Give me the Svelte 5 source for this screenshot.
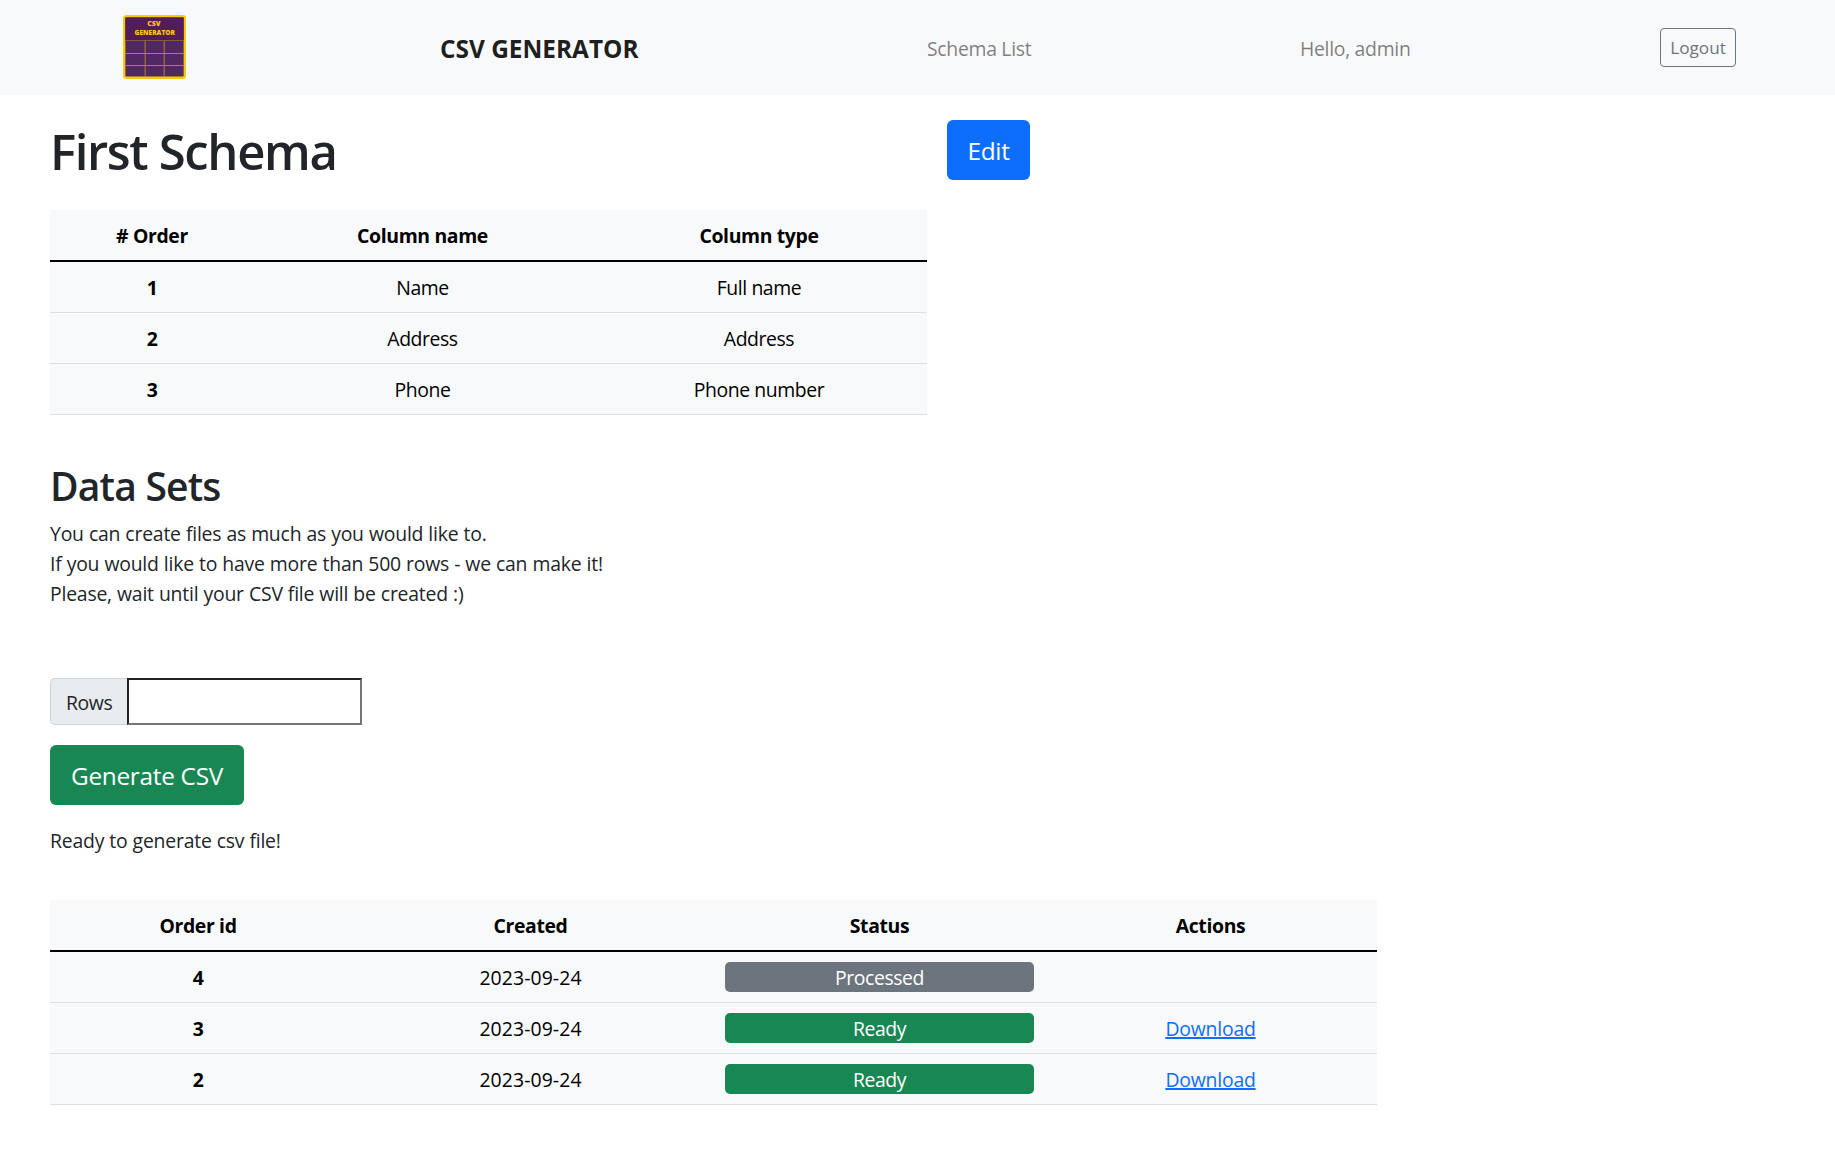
<script>
  const columns = [
    { order: 1, name: 'Name', type: 'Full name' },
    { order: 2, name: 'Address', type: 'Address' },
    { order: 3, name: 'Phone', type: 'Phone number' }
  ];
  const dataSets = [
    { id: 4, created: '2023-09-24', status: 'Processed' },
    { id: 3, created: '2023-09-24', status: 'Ready' },
    { id: 2, created: '2023-09-24', status: 'Ready' }
  ];
  let rows = $state('');
</script>

<nav class="navbar">
  <svg class="logo" viewBox="0 0 64 64" preserveAspectRatio="none" role="img" aria-label="CSV Generator">
    <rect x="1.2" y="1.2" width="61.6" height="61.6" rx="2" fill="#4f2864" stroke="#fdc904" stroke-width="2.4" />
    <rect x="2.4" y="2.4" width="59.2" height="22.6" fill="#511c58" />
    <g fill="none" stroke="#b4861f" stroke-width="1">
      <path d="M2.5 25.5H61.5" stroke="#8a5a3c" />
      <path d="M2.5 38.5H61.5M2.5 50.5H61.5M22.5 26V61.5M41.8 26V61.5" />
    </g>
    <text x="31.5" y="11.5" textLength="13.5" lengthAdjust="spacingAndGlyphs">CSV</text>
    <text x="32.3" y="20.5" textLength="41" lengthAdjust="spacingAndGlyphs">GENERATOR</text>
  </svg>
  <a class="brand" href="#home">CSV GENERATOR</a>
  <a class="link list" href="#schemas">Schema List</a>
  <span class="link hello">Hello, admin</span>
  <button class="logout">Logout</button>
</nav>

<main>
  <header class="title-row">
    <h1>First Schema</h1>
    <button class="btn primary">Edit</button>
  </header>

  <table class="schema">
    <colgroup><col class="s1" /><col class="s2" /><col class="s3" /></colgroup>
    <thead>
      <tr><th># Order</th><th>Column name</th><th>Column type</th></tr>
    </thead>
    <tbody>
      {#each columns as c}
        <tr><th>{c.order}</th><td>{c.name}</td><td>{c.type}</td></tr>
      {/each}
    </tbody>
  </table>

  <h2>Data Sets</h2>
  <p class="intro">
    You can create files as much as you would like to.<br />
    If you would like to have more than 500 rows - we can make it!<br />
    Please, wait until your CSV file will be created :)
  </p>

  <div class="group">
    <label for="rows">Rows</label>
    <input id="rows" type="text" bind:value={rows} />
  </div>
  <button class="btn success">Generate CSV</button>
  <p class="ready">Ready to generate csv file!</p>

  <table class="sets">
    <colgroup><col class="d1" /><col class="d2" /><col class="d3" /><col class="d4" /></colgroup>
    <thead>
      <tr><th>Order id</th><th>Created</th><th>Status</th><th>Actions</th></tr>
    </thead>
    <tbody>
      {#each dataSets as d}
        <tr>
          <th>{d.id}</th>
          <td class="date">{d.created}</td>
          <td class="status"><div class="badge" class:done={d.status === 'Ready'}>{d.status}</div></td>
          <td>{#if d.status === 'Ready'}<a class="download" href="#download-{d.id}">Download</a>{/if}</td>
        </tr>
      {/each}
    </tbody>
  </table>
</main>

<style>
  :global(body) {
    background: #fff;
    color: #212529;
    font: 400 19.4px/30px 'Open Sans', 'Noto Sans', sans-serif;
    letter-spacing: -0.42px;
  }
  .navbar {
    display: flex;
    align-items: center;
    height: 95px;
    background: #f8f9fa;
    white-space: nowrap;
  }
  .logo {
    flex: none;
    width: 63px;
    height: 64px;
    margin: 0 0 1px 123px;
  }
  .logo text {
    font: 800 6.6px 'Open Sans', sans-serif;
    letter-spacing: 0;
    fill: #fdc904;
    text-anchor: middle;
  }
  .brand {
    width: 487px;
    margin-left: 254px;
    padding-top: 2px;
    font-size: 24.4px;
    font-weight: 700;
    letter-spacing: 0;
    color: rgba(0, 0, 0, 0.9);
    text-decoration: none;
  }
  .link {
    padding-top: 2px;
    color: rgba(0, 0, 0, 0.5);
    letter-spacing: -0.3px;
    text-decoration: none;
  }
  .list { width: 373px; }
  .hello { width: 360px; }
  .logout {
    box-sizing: border-box;
    width: 76px;
    height: 39px;
    padding: 0;
    border: 1px solid #6c757d;
    border-radius: 4px;
    background: transparent;
    color: #6c757d;
    font: 400 17.2px/26px 'Open Sans', sans-serif;
    letter-spacing: 0;
  }
  main {
    display: flow-root;
    padding: 25px 50px 0;
  }
  .title-row {
    display: flex;
    height: 60px;
  }
  h1 {
    width: 897px;
    margin: 0;
    font-size: 49px;
    font-weight: 600;
    line-height: 62px;
    letter-spacing: -1.35px;
  }
  h2 {
    margin: 47px 0 9px;
    font-size: 39px;
    font-weight: 600;
    line-height: 48px;
    letter-spacing: -0.8px;
  }
  .btn {
    display: block;
    height: 60px;
    padding: 1px 0 0;
    border: 0;
    border-radius: 6px;
    color: #fff;
    font: 400 24.4px/59px 'Open Sans', sans-serif;
    letter-spacing: -0.3px;
  }
  .primary { width: 83px; background: #0d6efd; }
  .success { width: 194px; margin-top: 20px; background: #198754; }
  table {
    table-layout: fixed;
    border-collapse: separate;
    border-spacing: 0;
    background: #f8f9fa;
    color: #000;
    text-align: center;
  }
  th, td {
    height: 30px;
    padding: 11px 10px 9px;
    border-bottom: 1px solid #dfe0e1;
  }
  th { font-weight: 700; letter-spacing: -0.35px; }
  thead th { border-bottom: 2px solid #000; }
  .schema { width: 877px; margin-top: 30px; }
  .s1 { width: 204px; }
  .s2 { width: 337px; }
  .s3 { width: 336px; }
  .sets { width: 1327px; margin-top: 44px; }
  .d1 { width: 296px; }
  .d2 { width: 369px; }
  .d3 { width: 329px; }
  .d4 { width: 333px; }
  p { margin: 0; letter-spacing: -0.21px; word-spacing: 0.3px; }
  .group {
    display: flex;
    width: 312px;
    height: 47px;
    margin-top: 69px;
  }
  label {
    box-sizing: border-box;
    width: 77px;
    padding: 10px 0 0 15px;
    border: 1px solid #ced4da;
    border-right: 0;
    border-radius: 5px 0 0 5px;
    background: #e9ecef;
    line-height: 28px;
  }
  input {
    box-sizing: border-box;
    width: 235px;
    height: 47px;
    padding: 2px 8px;
    border: 2px solid;
    border-color: #212121 #767676 #767676 #212121;
    border-radius: 0;
    background: #fff;
    font: inherit;
  }
  .ready { margin-top: 21px; }
  .date { letter-spacing: 0.1px; }
  .status { padding: 10px; }
  .badge {
    height: 30px;
    border-radius: 5px;
    background: #6c757d;
    color: #fff;
    line-height: 32px;
  }
  .done { background: #198754; }
  .download {
    color: #0d6efd;
    letter-spacing: -0.2px;
    text-decoration-thickness: 2px;
    text-underline-offset: 1px;
  }
</style>
